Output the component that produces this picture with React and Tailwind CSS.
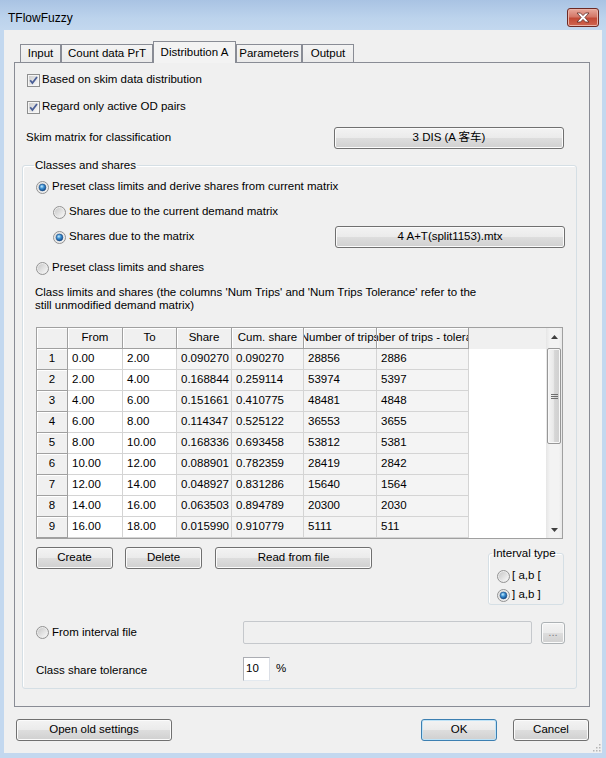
import React from "react";

const ROWS = [
  ["1", "0.00", "2.00", "0.090270", "0.090270", "28856", "2886"],
  ["2", "2.00", "4.00", "0.168844", "0.259114", "53974", "5397"],
  ["3", "4.00", "6.00", "0.151661", "0.410775", "48481", "4848"],
  ["4", "6.00", "8.00", "0.114347", "0.525122", "36553", "3655"],
  ["5", "8.00", "10.00", "0.168336", "0.693458", "53812", "5381"],
  ["6", "10.00", "12.00", "0.088901", "0.782359", "28419", "2842"],
  ["7", "12.00", "14.00", "0.048927", "0.831286", "15640", "1564"],
  ["8", "14.00", "16.00", "0.063503", "0.894789", "20300", "2030"],
  ["9", "16.00", "18.00", "0.015990", "0.910779", "5111", "511"],
];

const HEADERS = ["", "From", "To", "Share", "Cum. share", "Number of trips", "Number of trips - tolerance"];

const TABS = [
  { label: "Input", w: "w-[41px]" },
  { label: "Count data PrT", w: "w-[92px]" },
  { label: "Distribution A", w: "w-[83px]", active: true },
  { label: "Parameters", w: "w-[66px]" },
  { label: "Output", w: "w-[52px]" },
];

function CheckBox() {
  return (
    <svg width="13" height="13" viewBox="0 0 13 13" className="shrink-0">
      <defs>
        <linearGradient id="cbg" x1="0" y1="0" x2="1" y2="1">
          <stop offset="0" stopColor="#cdcdcd" />
          <stop offset="1" stopColor="#f9f9f9" />
        </linearGradient>
      </defs>
      <rect x="0.5" y="0.5" width="12" height="12" fill="#f5f5f5" stroke="#8e8f8f" />
      <rect x="2" y="2" width="9" height="9" fill="url(#cbg)" />
      <path d="M3.2 6.3 L5.4 9.1 L10 3" fill="none" stroke="#4a5f97" strokeWidth="1.8" />
    </svg>
  );
}

function Radio({ on = false }) {
  return (
    <svg width="13" height="13" viewBox="0 0 13 13" className="shrink-0">
      <defs>
        <linearGradient id="rbg" x1="0" y1="0" x2="1" y2="1">
          <stop offset="0" stopColor="#c8c8c8" />
          <stop offset="1" stopColor="#f8f8f8" />
        </linearGradient>
        <radialGradient id="rdot" cx="0.4" cy="0.35" r="0.7">
          <stop offset="0" stopColor="#c4ecff" />
          <stop offset="0.45" stopColor="#3b8fd1" />
          <stop offset="1" stopColor="#0c3f7e" />
        </radialGradient>
      </defs>
      <circle cx="6.5" cy="6.5" r="6" fill="#ececec" stroke="#929292" />
      <circle cx="6.5" cy="6.5" r="4.6" fill="url(#rbg)" />
      {on && <circle cx="6.5" cy="6.5" r="3.4" fill="url(#rdot)" stroke="#1d4f8a" strokeWidth="0.6" />}
    </svg>
  );
}

function Btn({ className = "", def = false, dim = false, children }) {
  return (
    <div
      className={`flex shrink-0 items-center justify-center rounded-[3px] border bg-[linear-gradient(180deg,#f3f3f3_0%,#ebebeb_48%,#dddddd_52%,#d0d0d0_100%)] ${
        def
          ? "border-[#3c7fb1] shadow-[inset_0_0_0_1px_#bfe3f7]"
          : dim
          ? "border-[#adb2b5] text-[#838383] shadow-[inset_0_0_0_1px_#fbfbfb]"
          : "border-[#707070] shadow-[inset_0_0_0_1px_#fbfbfb]"
      } ${className}`}
    >
      {children}
    </div>
  );
}

function Arrow({ up }) {
  return (
    <svg width="7" height="4" viewBox="0 0 7 4">
      <path d={up ? "M0 4 L3.5 0 L7 4 Z" : "M0 0 L3.5 4 L7 0 Z"} fill="#404040" />
    </svg>
  );
}

function Grid() {
  return (
    <div className="flex h-[212px] w-[527px] border border-[#a0a0a0] bg-white">
      <div className="grid w-[509px] grid-cols-[31px_55px_54px_55px_72px_73px_92px_1fr] auto-rows-[21px]">
        {HEADERS.map((h, i) => (
          <div
            key={"h" + i}
            className="flex items-center justify-center overflow-hidden whitespace-nowrap border-b border-r border-[#a0a0a0] bg-[#f0f0f0] shadow-[inset_1px_1px_0_#ffffff]"
          >
            {h}
          </div>
        ))}
        <div className="bg-[#f0f0f0]" />
        {ROWS.map((r) => (
          <React.Fragment key={r[0]}>
            {r.map((v, i) =>
              i === 0 ? (
                <div
                  key={i}
                  className="flex items-center justify-center border-b border-r border-[#a0a0a0] bg-[#f0f0f0] shadow-[inset_1px_1px_0_#ffffff]"
                >
                  {v}
                </div>
              ) : (
                <div
                  key={i}
                  className={`flex items-center overflow-hidden whitespace-nowrap border-b border-r border-[#d4d4d4] pl-[4px] ${
                    i < 3 ? "bg-white" : "bg-[#f4f4f4]"
                  }`}
                >
                  {v}
                </div>
              )
            )}
            <div className="bg-white" />
          </React.Fragment>
        ))}
      </div>
      <div className="flex w-[16px] flex-col bg-[linear-gradient(90deg,#e6e6e6,#f3f3f3_25%,#f3f3f3_80%,#e8e8e8)]">
        <div className="flex h-[17px] items-center justify-center">
          <Arrow up />
        </div>
        <div className="h-[3px]" />
        <div className="mx-[1px] flex h-[96px] items-center justify-center rounded-[2px] border border-[#979797] bg-[linear-gradient(90deg,#f4f4f4,#e9e9e9_45%,#d6d6d6_55%,#cfcfcf)] shadow-[inset_0_0_0_1px_#f8f8f8]">
          <svg width="7" height="7" viewBox="0 0 7 7">
            <path d="M0 1.5 H7 M0 3.5 H7 M0 5.5 H7" stroke="#6e6e6e" strokeWidth="1" />
          </svg>
        </div>
        <div className="flex-1" />
        <div className="flex h-[17px] items-center justify-center">
          <Arrow />
        </div>
      </div>
    </div>
  );
}

export default function App() {
  return (
    <div className="flex h-[758px] w-[606px] flex-col bg-[#c3d8ef] text-[11.5px] text-black font-['Liberation_Sans','Noto_Sans_CJK_SC',sans-serif]">
      <div className="flex h-[30px] shrink-0 items-center bg-[linear-gradient(180deg,#a9c3e3,#bcd3ec_60%,#c3d8ef)] pl-[8px] pr-[7px] pt-[5px]">
        <span className="text-[12px]">TFlowFuzzy</span>
        <div className="ml-auto flex h-[19px] w-[32px] items-center justify-center rounded-[3px] border border-[#6d2a24] bg-[linear-gradient(180deg,#e8a99c_0%,#d47868_45%,#c24a36_55%,#d0654f_100%)] shadow-[inset_0_0_0_1px_#eab3a8]">
          <svg width="14" height="11" viewBox="0 0 14 11">
            <path
              d="M1 1 H4.5 L7 3.6 L9.5 1 H13 L8.9 5.5 L13 10 H9.5 L7 7.4 L4.5 10 H1 L5.1 5.5 Z"
              fill="#ffffff"
              stroke="#5a2a24"
              strokeWidth="0.8"
            />
          </svg>
        </div>
      </div>

      <div className="relative mx-[4px] mb-[5px] flex flex-1 flex-col bg-[#f0f0f0]">
        <div className="flex h-[32px] items-end pl-[16px]">
          {TABS.map((t) =>
            t.active ? (
              <div
                key={t.label}
                className={`relative z-10 -mb-px flex h-[22px] items-center justify-center border border-b-0 border-[#898c95] bg-[#f3f3f3] ${t.w}`}
              >
                {t.label}
              </div>
            ) : (
              <div
                key={t.label}
                className={`flex h-[18px] items-center justify-center border border-b-0 border-[#898c95] bg-[linear-gradient(180deg,#f3f3f3,#ebebeb)] ${t.w}`}
              >
                {t.label}
              </div>
            )
          )}
        </div>

        <div className="ml-[10px] flex h-[645px] w-[576px] flex-col border border-[#898c95] pt-[7px]">
          <div className="flex h-[20px] items-center gap-[2px] pl-[12px]">
            <CheckBox />
            <span>Based on skim data distribution</span>
          </div>
          <div className="mt-[7px] flex h-[20px] items-center gap-[2px] pl-[12px]">
            <CheckBox />
            <span>Regard only active OD pairs</span>
          </div>
          <div className="mt-[10px] flex h-[22px] items-center pl-[11px] pr-[25px]">
            <span>Skim matrix for classification</span>
            <Btn className="ml-auto h-[22px] w-[230px]">3 DIS (A 客车)</Btn>
          </div>

          <fieldset className="ml-[7px] mt-[9px] h-[531px] w-[554px] rounded-[3px] border border-[#d5dfe5] pl-[13px] pr-[11px] shadow-[inset_1px_1px_0_#ffffff]">
            <legend className="-ml-[2px] px-[1px] leading-[14px]">Classes and shares</legend>

            <div className="mt-[6px] flex h-[18px] items-center gap-[3px]">
              <Radio on />
              <span>Preset class limits and derive shares from current matrix</span>
            </div>
            <div className="mt-[7px] flex h-[18px] items-center gap-[3px] pl-[17px]">
              <Radio />
              <span>Shares due to the current demand matrix</span>
            </div>
            <div className="mt-[5px] flex h-[22px] items-center gap-[3px] pl-[17px]">
              <Radio on />
              <span>Shares due to the matrix</span>
              <Btn className="ml-auto h-[22px] w-[230px]">4 A+T(split1153).mtx</Btn>
            </div>
            <div className="mt-[11px] flex h-[18px] items-center gap-[3px]">
              <Radio />
              <span>Preset class limits and shares</span>
            </div>
            <p className="-ml-[1px] mt-[9px] leading-[13px]">
              Class limits and shares (the columns 'Num Trips' and 'Num Trips Tolerance' refer to the
              <br />
              still unmodified demand matrix)
            </p>

            <div className="mt-[15px]">
              <Grid />
            </div>

            <div className="mt-[7px] flex h-[59px] items-start pr-[1px]">
              <Btn className="mt-[1px] h-[22px] w-[77px]">Create</Btn>
              <Btn className="ml-[12px] mt-[1px] h-[22px] w-[77px]">Delete</Btn>
              <Btn className="ml-[13px] mt-[1px] h-[22px] w-[157px]">Read from file</Btn>
              <fieldset className="ml-auto h-[59px] w-[76px] rounded-[3px] border border-[#d5dfe5] pl-[8px] shadow-[inset_1px_1px_0_#ffffff]">
                <legend className="-ml-[5px] px-[1px] leading-[14px]">Interval type</legend>
                <div className="mt-[8px] flex h-[16px] items-center gap-[2px]">
                  <Radio />
                  <span>[ a,b [</span>
                </div>
                <div className="mt-[3px] flex h-[16px] items-center gap-[2px]">
                  <Radio on />
                  <span>] a,b ]</span>
                </div>
              </fieldset>
            </div>

            <div className="mt-[16px] flex h-[23px] items-center">
              <div className="flex w-[207px] items-center gap-[3px]">
                <Radio />
                <span>From interval file</span>
              </div>
              <div className="h-[23px] w-[289px] rounded-[2px] border border-[#c5c8cc] bg-[#f0f0f0]" />
              <Btn dim className="ml-[9px] h-[22px] w-[24px]">
                ...
              </Btn>
            </div>

            <div className="mt-[13px] flex h-[24px] items-center">
              <span className="w-[207px] pt-[3px]">Class share tolerance</span>
              <div className="flex h-[24px] w-[27px] items-center border border-[#abadb3] border-b-[#e3e9ef] border-r-[#dbdfe6] bg-white pl-[2px]">
                10
              </div>
              <span className="ml-[6px]">%</span>
            </div>
          </fieldset>
        </div>

        <div className="mt-[12px] flex h-[22px] pl-[12px] pr-[13px]">
          <Btn className="h-[22px] w-[156px]">Open old settings</Btn>
          <Btn def className="ml-auto h-[22px] w-[76px]">
            OK
          </Btn>
          <Btn className="ml-[16px] h-[22px] w-[76px]">Cancel</Btn>
        </div>

        <svg width="8" height="8" viewBox="0 0 8 8" className="absolute bottom-[1px] right-[1px]">
          <g fill="#b5b5b5">
            <rect x="6" y="0" width="1.5" height="1.5" />
            <rect x="3" y="3" width="1.5" height="1.5" />
            <rect x="6" y="3" width="1.5" height="1.5" />
            <rect x="0" y="6" width="1.5" height="1.5" />
            <rect x="3" y="6" width="1.5" height="1.5" />
            <rect x="6" y="6" width="1.5" height="1.5" />
          </g>
        </svg>
      </div>
    </div>
  );
}
